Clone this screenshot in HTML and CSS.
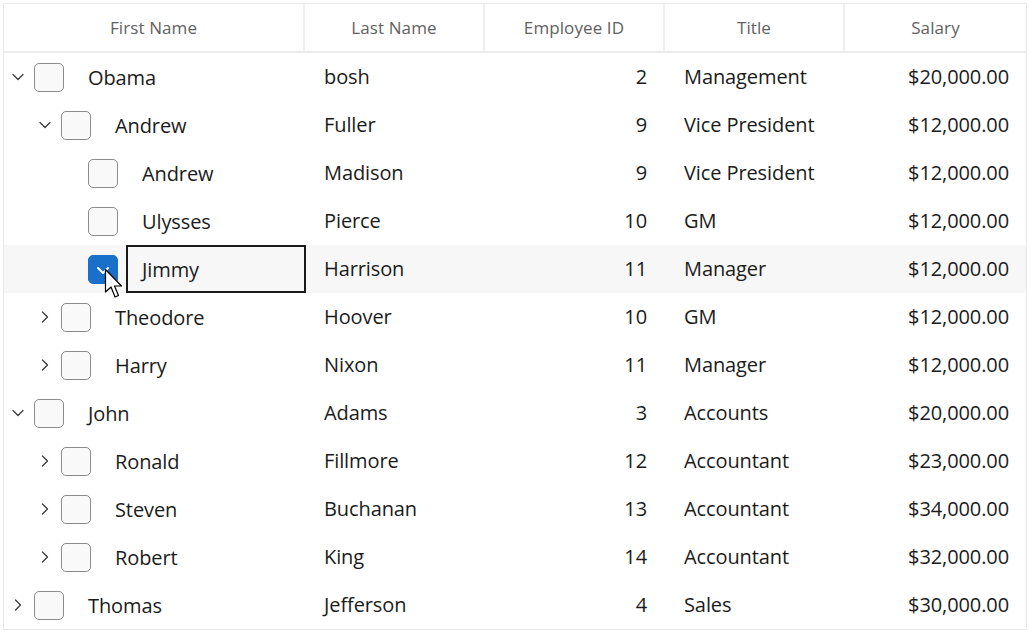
FILE: index.html
```html
<!DOCTYPE html>
<html>
<head>
<meta charset="utf-8">
<link rel="stylesheet" href="styles.css">
</head>
<body>
<div class="grid">
  <div class="hrow">
    <div class="hcell">First Name</div>
    <div class="hcell">Last Name</div>
    <div class="hcell">Employee ID</div>
    <div class="hcell">Title</div>
    <div class="hcell last">Salary</div>
  </div>

  <div class="row">
    <div class="cell first lvl0"><span class="exp down"><svg viewBox="0 0 12 8"><path d="M1 1.5 L6 6.5 L11 1.5"/></svg></span><span class="cb"></span><span class="name">Obama</span></div>
    <div class="cell">bosh</div><div class="cell num">2</div><div class="cell">Management</div><div class="cell num sal">$20,000.00</div>
  </div>
  <div class="row">
    <div class="cell first lvl1"><span class="exp down"><svg viewBox="0 0 12 8"><path d="M1 1.5 L6 6.5 L11 1.5"/></svg></span><span class="cb"></span><span class="name">Andrew</span></div>
    <div class="cell">Fuller</div><div class="cell num">9</div><div class="cell">Vice President</div><div class="cell num sal">$12,000.00</div>
  </div>
  <div class="row">
    <div class="cell first lvl2"><span class="exp"></span><span class="cb"></span><span class="name">Andrew</span></div>
    <div class="cell">Madison</div><div class="cell num">9</div><div class="cell">Vice President</div><div class="cell num sal">$12,000.00</div>
  </div>
  <div class="row">
    <div class="cell first lvl2"><span class="exp"></span><span class="cb"></span><span class="name">Ulysses</span></div>
    <div class="cell">Pierce</div><div class="cell num">10</div><div class="cell">GM</div><div class="cell num sal">$12,000.00</div>
  </div>
  <div class="row sel">
    <div class="cell first lvl2"><span class="exp"></span><span class="cb on"><svg viewBox="0 0 30 29"><path d="M10 13 L15 18 L20 13"/></svg><svg class="cursor" viewBox="0 0 20 32"><path d="M1.5 1.5 L1.5 24 L7 19 L11 29 L14.5 27.5 L10.5 18 L17.5 18 Z"/></svg></span><span class="name focus">Jimmy</span></div>
    <div class="cell">Harrison</div><div class="cell num">11</div><div class="cell">Manager</div><div class="cell num sal">$12,000.00</div>
  </div>
  <div class="row">
    <div class="cell first lvl1"><span class="exp right"><svg viewBox="0 0 8 12"><path d="M1.5 1 L6.5 6 L1.5 11"/></svg></span><span class="cb"></span><span class="name">Theodore</span></div>
    <div class="cell">Hoover</div><div class="cell num">10</div><div class="cell">GM</div><div class="cell num sal">$12,000.00</div>
  </div>
  <div class="row">
    <div class="cell first lvl1"><span class="exp right"><svg viewBox="0 0 8 12"><path d="M1.5 1 L6.5 6 L1.5 11"/></svg></span><span class="cb"></span><span class="name">Harry</span></div>
    <div class="cell">Nixon</div><div class="cell num">11</div><div class="cell">Manager</div><div class="cell num sal">$12,000.00</div>
  </div>
  <div class="row">
    <div class="cell first lvl0"><span class="exp down"><svg viewBox="0 0 12 8"><path d="M1 1.5 L6 6.5 L11 1.5"/></svg></span><span class="cb"></span><span class="name">John</span></div>
    <div class="cell">Adams</div><div class="cell num">3</div><div class="cell">Accounts</div><div class="cell num sal">$20,000.00</div>
  </div>
  <div class="row">
    <div class="cell first lvl1"><span class="exp right"><svg viewBox="0 0 8 12"><path d="M1.5 1 L6.5 6 L1.5 11"/></svg></span><span class="cb"></span><span class="name">Ronald</span></div>
    <div class="cell">Fillmore</div><div class="cell num">12</div><div class="cell">Accountant</div><div class="cell num sal">$23,000.00</div>
  </div>
  <div class="row">
    <div class="cell first lvl1"><span class="exp right"><svg viewBox="0 0 8 12"><path d="M1.5 1 L6.5 6 L1.5 11"/></svg></span><span class="cb"></span><span class="name">Steven</span></div>
    <div class="cell">Buchanan</div><div class="cell num">13</div><div class="cell">Accountant</div><div class="cell num sal">$34,000.00</div>
  </div>
  <div class="row">
    <div class="cell first lvl1"><span class="exp right"><svg viewBox="0 0 8 12"><path d="M1.5 1 L6.5 6 L1.5 11"/></svg></span><span class="cb"></span><span class="name">Robert</span></div>
    <div class="cell">King</div><div class="cell num">14</div><div class="cell">Accountant</div><div class="cell num sal">$32,000.00</div>
  </div>
  <div class="row">
    <div class="cell first lvl0"><span class="exp right"><svg viewBox="0 0 8 12"><path d="M1.5 1 L6.5 6 L1.5 11"/></svg></span><span class="cb"></span><span class="name">Thomas</span></div>
    <div class="cell">Jefferson</div><div class="cell num">4</div><div class="cell">Sales</div><div class="cell num sal">$30,000.00</div>
  </div>
</div>
</body>
</html>
```

FILE: styles.css
```css
html, body {
  margin: 0;
  padding: 0;
  background: #ffffff;
}
body {
  padding: 3px 0 0 3px;
  font-family: "Open Sans", "Noto Sans", sans-serif;
  color: #1b1b1b;
}
.grid {
  width: 1024px;
  box-sizing: border-box;
  border: 1px solid #e8e8e8;
}
.hrow, .row {
  display: grid;
  grid-template-columns: 301px 180px 180px 180px 181px;
}
.hrow {
  height: 49px;
  box-sizing: border-box;
  border-bottom: 2px solid #ececec;
}
.hcell {
  display: flex;
  align-items: center;
  justify-content: center;
  font-size: 17px;
  color: #616161;
  border-right: 2px solid #f0f0f0;
  letter-spacing: 0.1px;
}
.hcell.last {
  border-right: none;
}
.row {
  height: 48px;
}
.row.sel {
  background: #f7f7f7;
}
.cell {
  display: flex;
  align-items: center;
  font-size: 20px;
  padding: 0 17px 2px 19px;
  letter-spacing: -0.1px;
}
.cell.num {
  justify-content: flex-end;
  padding-right: 18px;
}
.cell.sal {
  padding-right: 17px;
}
.cell.first {
  padding: 0;
  position: relative;
}
.lvl0 { padding-left: 4px !important; }
.lvl1 { padding-left: 31px !important; }
.lvl2 { padding-left: 58px !important; }
.exp {
  width: 20px;
  height: 20px;
  display: flex;
  align-items: center;
  justify-content: center;
  flex: none;
}
.exp svg path, .cb svg path {
  fill: none;
  stroke: #3a3a3a;
  stroke-width: 1.3;
  stroke-linecap: round;
  stroke-linejoin: round;
}
.exp.down svg { width: 12px; height: 8px; }
.exp.right svg { width: 8px; height: 12px; }
.cb {
  width: 30px;
  height: 29px;
  box-sizing: border-box;
  border: 1px solid #8c8c8c;
  border-radius: 5px;
  background: #f9f9f9;
  margin-left: 6px;
  flex: none;
  position: relative;
}
.cb.on {
  background: #1a6fc9;
  border-color: #1a6fc9;
}
.cb.on svg {
  width: 30px;
  height: 29px;
  position: absolute;
  left: -1px;
  top: -1px;
}
.cb.on svg path {
  stroke: #ffffff;
  stroke-width: 2;
}
.cb .cursor {
  position: absolute;
  left: 15px !important;
  top: 12px !important;
  width: 20px !important;
  height: 32px !important;
}
.cb .cursor path {
  fill: #ffffff !important;
  stroke: #000000 !important;
  stroke-width: 1.2 !important;
}
.name {
  margin-left: 8px;
  padding-left: 16px;
  height: 48px;
  flex: 1;
  display: flex;
  align-items: center;
  box-sizing: border-box;
  padding-top: 1px;
}
.name.focus {
  border: 2px solid #1a1a1a;
  padding-left: 14px;
  margin-right: -1px;
}
```
